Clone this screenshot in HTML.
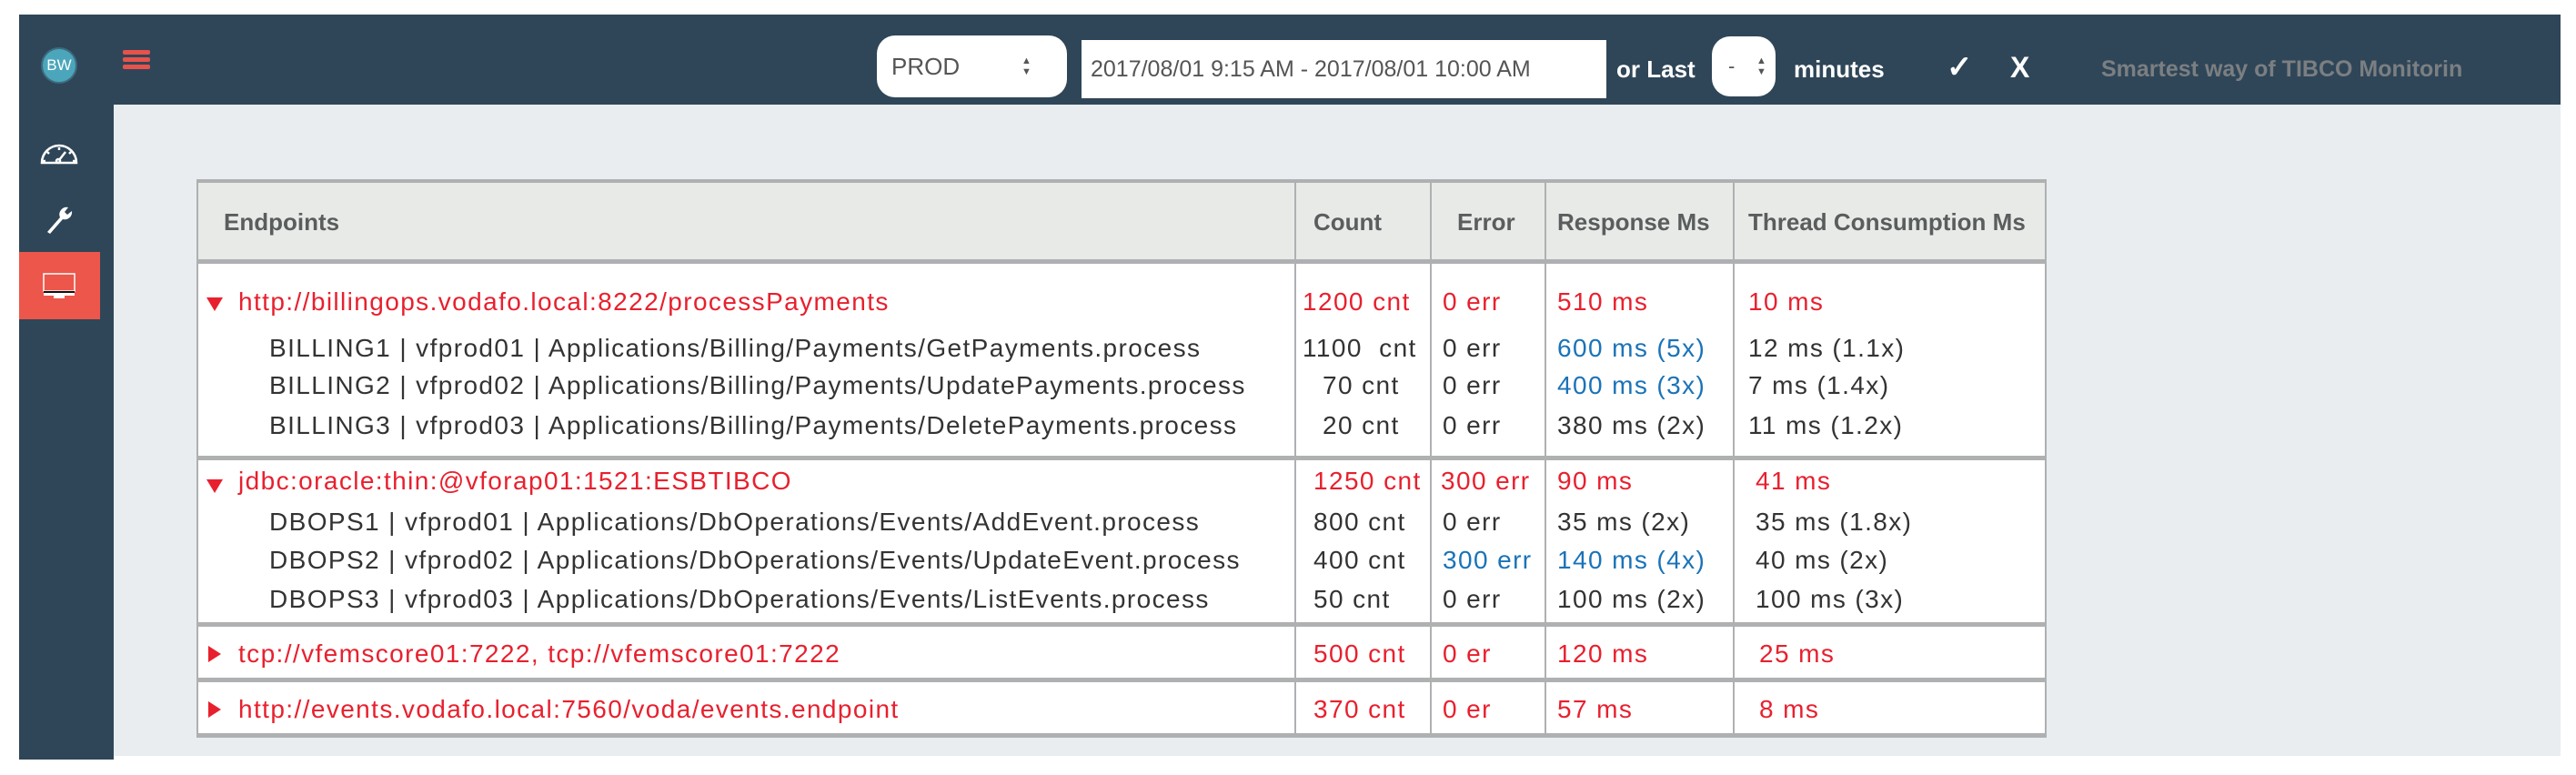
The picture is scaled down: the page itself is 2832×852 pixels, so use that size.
<!DOCTYPE html>
<html><head><meta charset="utf-8"><style>
*{margin:0;padding:0;box-sizing:border-box}
body{width:2832px;height:852px;background:#fff;position:relative;overflow:hidden;font-family:"Liberation Sans",sans-serif}
.a{position:absolute;white-space:nowrap}
.t{position:absolute;white-space:nowrap;font-size:28px;letter-spacing:1.4px;line-height:36px;height:36px;color:#333}
.r{color:#e8202e}.b{color:#1a73b8}
.hd{position:absolute;font-size:26px;font-weight:bold;color:#5a5d5d;line-height:36px;top:226px}
.vl{position:absolute;top:199px;height:610px;width:2px;background:#aeb0b2}
.hl{position:absolute;left:216px;width:2034px;height:5px;background:#aeb0b2}
.tri{position:absolute;width:0;height:0}
.ar{position:absolute;font-size:11px;color:#555;line-height:12px}
</style></head><body>
<div class="a" style="left:21px;top:16px;width:2794px;height:99px;background:#2f4658"></div>
<div class="a" style="left:21px;top:115px;width:104px;height:720px;background:#2f4658"></div>
<div class="a" style="left:125px;top:115px;width:2690px;height:716px;background:#e9edf0"></div>
<div class="a" style="left:45px;top:52px;width:40px;height:40px;border-radius:50%;background:#4ba6bb;border:2px solid #3d6b80;color:#fff;font-size:17px;line-height:36px;text-align:center">BW</div>
<div class="a" style="left:135px;top:55px;width:30px;height:5px;background:#e8524a;border-radius:2px"></div>
<div class="a" style="left:135px;top:63px;width:30px;height:5px;background:#e8524a;border-radius:2px"></div>
<div class="a" style="left:135px;top:71px;width:30px;height:5px;background:#e8524a;border-radius:2px"></div>
<svg class="a" style="left:44px;top:152px" width="42" height="30" viewBox="0 0 42 30" fill="none" stroke="#fff" stroke-width="2.5"><path d="M2 27 A19 19 0 0 1 40 27 Z"/><path d="M21 10v3M8 15l2 2M34 15l-2 2M3 25h3M36 25h3M21 24l7-9"/><circle cx="20" cy="25" r="2"/></svg>
<svg class="a" style="left:48px;top:224px" width="34" height="34" viewBox="0 0 34 34"><path d="M4 31 L18 15 A8 8 0 0 1 27 4 L23 9 L26 12 L31 8 A8 8 0 0 1 21 17 L7 33 Z" fill="#fff"/></svg>
<div class="a" style="left:21px;top:277px;width:89px;height:74px;background:#ec564b"></div>
<svg class="a" style="left:47px;top:300px" width="36" height="29" viewBox="0 0 36 29"><rect x="1" y="1" width="34" height="19" fill="none" stroke="#fff" stroke-width="1.5"/><rect x="1" y="20" width="34" height="2" fill="#111"/><rect x="1" y="22" width="34" height="3" fill="#fff"/><rect x="12" y="25" width="12" height="3" fill="#fff"/></svg>
<div class="a" style="left:964px;top:39px;width:209px;height:68px;background:#fff;border-radius:20px;font-size:26px;color:#555;line-height:68px;padding-left:16px">PROD</div>
<div class="ar" style="left:1123px;top:61px">▲<br>▼</div>
<div class="a" style="left:1189px;top:44px;width:577px;height:64px;background:#fff;font-size:25px;color:#555;line-height:64px;padding-left:10px">2017/08/01 9:15 AM - 2017/08/01 10:00 AM</div>
<div class="a" style="left:1777px;top:52px;font-size:26px;color:#fff;font-weight:bold;line-height:48px">or Last</div>
<div class="a" style="left:1882px;top:40px;width:70px;height:66px;background:#fff;border-radius:20px;font-size:22px;color:#555;line-height:66px;padding-left:18px">-</div>
<div class="ar" style="left:1931px;top:61px">▲<br>▼</div>
<div class="a" style="left:1972px;top:52px;font-size:26px;color:#fff;font-weight:bold;line-height:48px">minutes</div>
<div class="a" style="left:2140px;top:50px;font-size:34px;color:#fff;font-weight:bold;line-height:48px">✓</div>
<div class="a" style="left:2210px;top:50px;font-size:32px;color:#fff;font-weight:bold;line-height:48px">X</div>
<div class="a" style="left:2310px;top:52px;font-size:25px;color:#7b7f82;font-weight:bold;line-height:48px">Smartest way of TIBCO Monitorin</div>
<div class="a" style="left:216px;top:199px;width:2034px;height:610px;background:#fff"></div>
<div class="a" style="left:216px;top:199px;width:2034px;height:88px;background:#e8eae8"></div>
<div class="hl" style="top:197px;height:4px"></div>
<div class="hl" style="top:285px"></div>
<div class="hl" style="top:501px"></div>
<div class="hl" style="top:684px"></div>
<div class="hl" style="top:745px"></div>
<div class="hl" style="top:806px"></div>
<div class="vl" style="left:216px"></div><div class="vl" style="left:1423px"></div><div class="vl" style="left:1572px"></div><div class="vl" style="left:1698px"></div><div class="vl" style="left:1905px"></div><div class="vl" style="left:2248px"></div>
<div class="hd" style="left:246px">Endpoints</div>
<div class="hd" style="left:1444px">Count</div>
<div class="hd" style="left:1602px">Error</div>
<div class="hd" style="left:1712px">Response Ms</div>
<div class="hd" style="left:1922px">Thread Consumption Ms</div>

<div class="tri" style="left:227px;top:327px;border-left:9px solid transparent;border-right:9px solid transparent;border-top:15px solid #e8202e"></div>
<div class="t r" style="left:262px;top:314px">http://billingops.vodafo.local:8222/processPayments</div>
<div class="t r" style="left:1432px;top:314px">1200 cnt</div><div class="t r" style="left:1586px;top:314px">0 err</div><div class="t r" style="left:1712px;top:314px">510 ms</div><div class="t r" style="left:1922px;top:314px">10 ms</div>
<div class="t" style="left:296px;top:365px">BILLING1 | vfprod01 | Applications/Billing/Payments/GetPayments.process</div>
<div class="t" style="left:1432px;top:365px">1100&nbsp; cnt</div><div class="t" style="left:1586px;top:365px">0 err</div><div class="t b" style="left:1712px;top:365px">600 ms (5x)</div><div class="t" style="left:1922px;top:365px">12 ms (1.1x)</div>
<div class="t" style="left:296px;top:406px">BILLING2 | vfprod02 | Applications/Billing/Payments/UpdatePayments.process</div>
<div class="t" style="left:1454px;top:406px">70 cnt</div><div class="t" style="left:1586px;top:406px">0 err</div><div class="t b" style="left:1712px;top:406px">400 ms (3x)</div><div class="t" style="left:1922px;top:406px">7 ms (1.4x)</div>
<div class="t" style="left:296px;top:450px">BILLING3 | vfprod03 | Applications/Billing/Payments/DeletePayments.process</div>
<div class="t" style="left:1454px;top:450px">20 cnt</div><div class="t" style="left:1586px;top:450px">0 err</div><div class="t" style="left:1712px;top:450px">380 ms (2x)</div><div class="t" style="left:1922px;top:450px">11 ms (1.2x)</div>

<div class="tri" style="left:227px;top:527px;border-left:9px solid transparent;border-right:9px solid transparent;border-top:15px solid #e8202e"></div>
<div class="t r" style="left:262px;top:511px">jdbc:oracle:thin:@vforap01:1521:ESBTIBCO</div>
<div class="t r" style="left:1444px;top:511px">1250 cnt</div><div class="t r" style="left:1584px;top:511px">300 err</div><div class="t r" style="left:1712px;top:511px">90 ms</div><div class="t r" style="left:1930px;top:511px">41 ms</div>
<div class="t" style="left:296px;top:556px">DBOPS1 | vfprod01 | Applications/DbOperations/Events/AddEvent.process</div>
<div class="t" style="left:1444px;top:556px">800 cnt</div><div class="t" style="left:1586px;top:556px">0 err</div><div class="t" style="left:1712px;top:556px">35 ms (2x)</div><div class="t" style="left:1930px;top:556px">35 ms (1.8x)</div>
<div class="t" style="left:296px;top:598px">DBOPS2 | vfprod02 | Applications/DbOperations/Events/UpdateEvent.process</div>
<div class="t" style="left:1444px;top:598px">400 cnt</div><div class="t b" style="left:1586px;top:598px">300 err</div><div class="t b" style="left:1712px;top:598px">140 ms (4x)</div><div class="t" style="left:1930px;top:598px">40 ms (2x)</div>
<div class="t" style="left:296px;top:641px">DBOPS3 | vfprod03 | Applications/DbOperations/Events/ListEvents.process</div>
<div class="t" style="left:1444px;top:641px">50 cnt</div><div class="t" style="left:1586px;top:641px">0 err</div><div class="t" style="left:1712px;top:641px">100 ms (2x)</div><div class="t" style="left:1930px;top:641px">100 ms (3x)</div>

<div class="tri" style="left:229px;top:710px;border-top:9px solid transparent;border-bottom:9px solid transparent;border-left:14px solid #e8202e"></div>
<div class="t r" style="left:262px;top:701px">tcp://vfemscore01:7222, tcp://vfemscore01:7222</div>
<div class="t r" style="left:1444px;top:701px">500 cnt</div><div class="t r" style="left:1586px;top:701px">0 er</div><div class="t r" style="left:1712px;top:701px">120 ms</div><div class="t r" style="left:1934px;top:701px">25 ms</div>

<div class="tri" style="left:229px;top:771px;border-top:9px solid transparent;border-bottom:9px solid transparent;border-left:14px solid #e8202e"></div>
<div class="t r" style="left:262px;top:762px">http://events.vodafo.local:7560/voda/events.endpoint</div>
<div class="t r" style="left:1444px;top:762px">370 cnt</div><div class="t r" style="left:1586px;top:762px">0 er</div><div class="t r" style="left:1712px;top:762px">57 ms</div><div class="t r" style="left:1934px;top:762px">8 ms</div>
</body></html>
